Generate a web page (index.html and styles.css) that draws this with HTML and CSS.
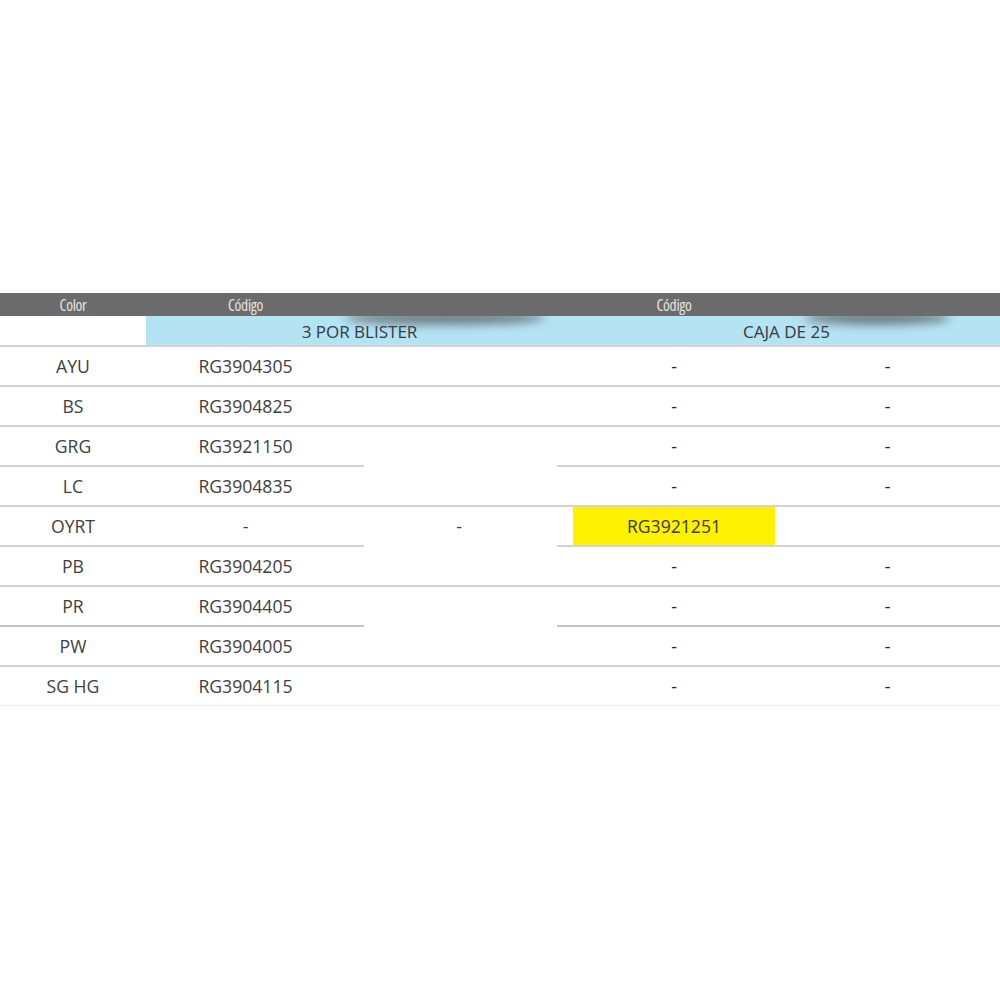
FILE: index.html
```html
<!DOCTYPE html>
<html lang="es">
<head>
<meta charset="utf-8">
<title>Tabla de códigos</title>
<link rel="stylesheet" href="styles.css">
</head>
<body>
<div class="sheet">
  <div class="row head">
    <div class="cell">Color</div>
    <div class="cell">Código</div>
    <div class="cell"></div>
    <div class="cell">Código</div>
    <div class="cell"></div>
  </div>
  <div class="row sub">
    <div class="cell blank"></div>
    <div class="cell band">3 POR BLISTER</div>
    <div class="cell band">CAJA DE 25</div>
    <span class="smear smear-a"></span>
    <span class="smear smear-b"></span>
  </div>
  <div class="rule"></div>

  <div class="row data"><div class="cell">AYU</div><div class="cell">RG3904305</div><div class="cell"></div><div class="cell dash">-</div><div class="cell dash">-</div></div>
  <div class="rule"></div>
  <div class="row data"><div class="cell">BS</div><div class="cell">RG3904825</div><div class="cell"></div><div class="cell dash">-</div><div class="cell dash">-</div></div>
  <div class="rule"></div>
  <div class="row data"><div class="cell">GRG</div><div class="cell">RG3921150</div><div class="cell"></div><div class="cell dash">-</div><div class="cell dash">-</div></div>
  <div class="rule split"><span class="seg left"></span><span class="gap"></span><span class="seg right"></span></div>
  <div class="row data"><div class="cell">LC</div><div class="cell">RG3904835</div><div class="cell"></div><div class="cell dash">-</div><div class="cell dash">-</div></div>
  <div class="rule"></div>
  <div class="row data"><div class="cell">OYRT</div><div class="cell">-</div><div class="cell">-</div><div class="cell mark">RG3921251</div><div class="cell"></div></div>
  <div class="rule split"><span class="seg left"></span><span class="gap"></span><span class="seg right"></span></div>
  <div class="row data"><div class="cell">PB</div><div class="cell">RG3904205</div><div class="cell"></div><div class="cell dash">-</div><div class="cell dash">-</div></div>
  <div class="rule"></div>
  <div class="row data"><div class="cell">PR</div><div class="cell">RG3904405</div><div class="cell"></div><div class="cell dash">-</div><div class="cell dash">-</div></div>
  <div class="rule split dark"><span class="seg left"></span><span class="gap"></span><span class="seg right"></span></div>
  <div class="row data"><div class="cell">PW</div><div class="cell">RG3904005</div><div class="cell"></div><div class="cell dash">-</div><div class="cell dash">-</div></div>
  <div class="rule"></div>
  <div class="row data"><div class="cell">SG HG</div><div class="cell">RG3904115</div><div class="cell"></div><div class="cell dash">-</div><div class="cell dash">-</div></div>
  <div class="rule last"></div>
</div>
</body>
</html>
```

FILE: styles.css
```css
* { box-sizing: border-box; }
html, body {
  margin: 0;
  padding: 0;
  background: #ffffff;
}
body {
  font-family: "Open Sans", "DejaVu Sans", sans-serif;
  color: #3a3a3a;
}
.sheet {
  padding-top: 293px;
  width: 1000px;
}
.row {
  display: grid;
  grid-template-columns: 146px 199px 228px 202px 225px;
}
.cell {
  display: flex;
  align-items: center;
  justify-content: center;
  white-space: nowrap;
}
.head {
  height: 23px;
  background: #6b6b6b;
}
.head .cell {
  color: #e6e6e6;
  font-size: 15.5px;
  font-stretch: 80%;
  letter-spacing: -0.3px;
  padding-top: 1px;
}
.sub {
  position: relative;
  height: 29px;
  grid-template-columns: 146px 427px 427px;
  overflow: hidden;
}
.sub .band {
  background: #b4e3f4;
  font-size: 17px;
  color: #333a3e;
  padding-top: 1px;
}
.smear {
  position: absolute;
  top: -5px;
  height: 14px;
  background: #555;
  filter: blur(5px);
  opacity: 0.7;
  border-radius: 50%;
}
.smear-a { left: 345px; width: 200px; }
.smear-b { left: 805px; width: 145px; }
.rule {
  height: 2px;
  background: #d3d3d3;
}
.rule.split {
  display: flex;
  background: transparent;
}
.rule.split .seg { background: #d3d3d3; height: 2px; }
.rule.split .left { width: 364px; }
.rule.split .gap { width: 193px; }
.rule.split .right { flex: 1; }
.rule.split.dark .seg { background: #c4c4c4; }
.rule.last {
  height: 1px;
  background: #ececec;
}
.data {
  height: 38px;
}
.data .cell {
  font-size: 17.6px;
  color: #404040;
  padding-bottom: 1px;
}
.data .dash {
  color: #222;
}
.data .mark {
  background: #fff200;
  color: #3a3a20;
}
```
